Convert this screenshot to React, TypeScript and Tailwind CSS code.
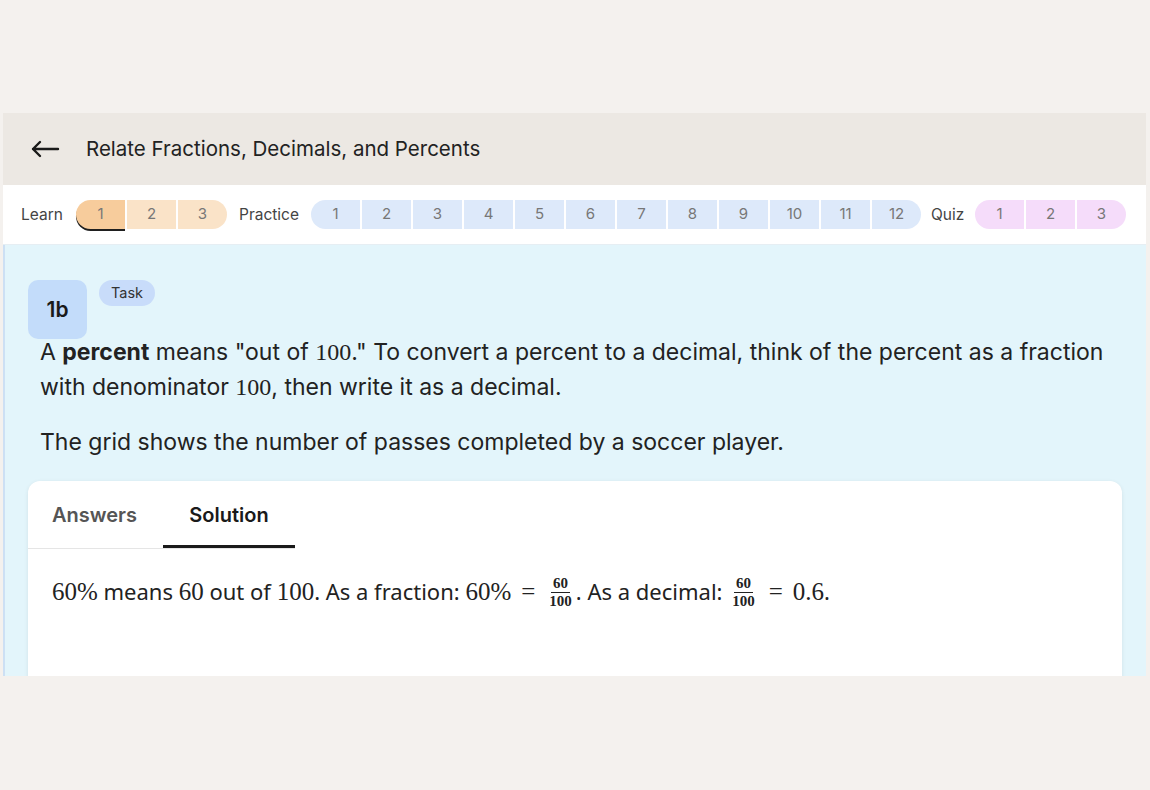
import React from 'react'

const learn = ['1', '2', '3']
const practice = ['1', '2', '3', '4', '5', '6', '7', '8', '9', '10', '11', '12']
const quiz = ['1', '2', '3']

const M = ({ children, size = 'text-[24px]' }: { children: React.ReactNode; size?: string }) => (
  <span className={`font-['Liberation_Serif',serif] ${size}`}>{children}</span>
)

const Eq = () => <span className="font-['Liberation_Serif',serif] text-[25px] mx-[10px]">=</span>

const Frac = ({ top, bottom }: { top: string; bottom: string }) => (
  <span className="inline-flex flex-col items-center align-middle mx-[2px] -mt-[4px] font-['Liberation_Serif',serif] text-[15px] font-bold leading-[15px]">
    <span className="px-[2px] pb-[1px] border-b border-[#222]">{top}</span>
    <span className="px-[2px] pt-[1px]">{bottom}</span>
  </span>
)

const PillGroup = ({ items, color, activeColor }: { items: string[]; color: string; activeColor?: string }) => (
  <div className="flex gap-[2px]">
    {items.map((n, i) => {
      const first = i === 0
      const last = i === items.length - 1
      const active = first && activeColor
      return (
        <div
          key={i}
          className={`w-[49px] h-[29px] flex items-center justify-center text-[15px] text-[#777] ${first ? 'rounded-l-full' : ''} ${last ? 'rounded-r-full' : ''} ${active ? 'shadow-[0_2px_0_#1f1f1f] text-[#555]' : ''}`}
          style={{ backgroundColor: active ? activeColor : color }}
        >
          {n}
        </div>
      )
    })}
  </div>
)

export default function App() {
  return (
    <div className="w-[1150px] h-[790px] bg-[#f4f1ee] font-['Inter',sans-serif] text-[#222] pt-[113px]">
      <div className="ml-[3px] w-[1143px] h-[563px] overflow-hidden flex flex-col">
        {/* header */}
        <div className="h-[72px] shrink-0 bg-[#ece8e3] flex items-center pl-[27px]">
          <svg width="30" height="18" viewBox="0 0 30 18" fill="none" stroke="#1a1a1a" strokeWidth="2.4" strokeLinecap="round" strokeLinejoin="round">
            <path d="M28 9H3M10 2L3 9l7 7" />
          </svg>
          <span className="ml-[26px] text-[20.5px] text-[#222]">Relate Fractions, Decimals, and Percents</span>
        </div>

        {/* progress nav */}
        <div className="h-[60px] shrink-0 bg-white flex items-center pl-[18px] border-b border-[#e6eef3]">
          <span className="text-[15.5px] text-[#444] w-[55px]">Learn</span>
          <PillGroup items={learn} color="#fae3c8" activeColor="#f7cc9c" />
          <span className="text-[15.5px] text-[#444] ml-[12px] w-[72px]">Practice</span>
          <PillGroup items={practice} color="#dde9fa" />
          <span className="text-[15.5px] text-[#444] ml-[10px] w-[44px]">Quiz</span>
          <PillGroup items={quiz} color="#f5dcfa" />
        </div>

        {/* content */}
        <div className="flex-1 bg-[#e3f5fb] border-l-2 border-[#cde0f4] pl-[23px] pr-[22px] pt-[35px]">
          <div className="flex items-start gap-[12px]">
            <div className="w-[59px] h-[59px] rounded-[10px] bg-[#c3dcfa] flex items-center justify-center text-[21px] font-semibold text-[#1a1a1a]">1b</div>
            <div className="h-[26px] px-[12px] rounded-full bg-[#c8dcfa] flex items-center text-[14.5px] text-[#333]">Task</div>
          </div>
          <p className="-mt-[4px] pl-[12px] text-[23px] leading-[35px] text-[#222]">
            A <b className="font-bold">percent</b> means "out of <M>100</M>." To convert a percent to a decimal, think of the percent as a fraction with denominator <M>100</M>, then write it as a decimal.
          </p>
          <p className="mt-[20px] pl-[12px] text-[23px] leading-[35px] text-[#222]">
            The grid shows the number of passes completed by a soccer player.
          </p>

          {/* card */}
          <div className="mt-[21px] bg-white rounded-t-[12px] shadow-[0_1px_4px_rgba(0,0,0,0.08)] h-[240px] w-[1094px]">
            <div className="flex w-[267px] border-b border-[#e5e5e5]">
              <div className="w-[135px] h-[67px] flex items-center pl-[24px] text-[20px] font-semibold text-[#555]">Answers</div>
              <div className="w-[132px] h-[67px] flex items-center justify-center pt-[3px] text-[20px] font-semibold text-[#1a1a1a] border-b-[3px] border-[#1a1a1a] -mb-px">Solution</div>
            </div>
            <div className="pl-[24px] pt-[24px] text-[22px] text-[#222] font-['Noto_Sans',sans-serif]">
              <M size="text-[25px]">60%</M> means <M size="text-[25px]">60</M> out of <M size="text-[25px]">100</M>. As a fraction: <M size="text-[25px]">60%</M><Eq /><Frac top="60" bottom="100" />. As a decimal: <Frac top="60" bottom="100" /><Eq /><M size="text-[25px]">0.6</M>.
            </div>
          </div>
        </div>
      </div>
    </div>
  )
}
